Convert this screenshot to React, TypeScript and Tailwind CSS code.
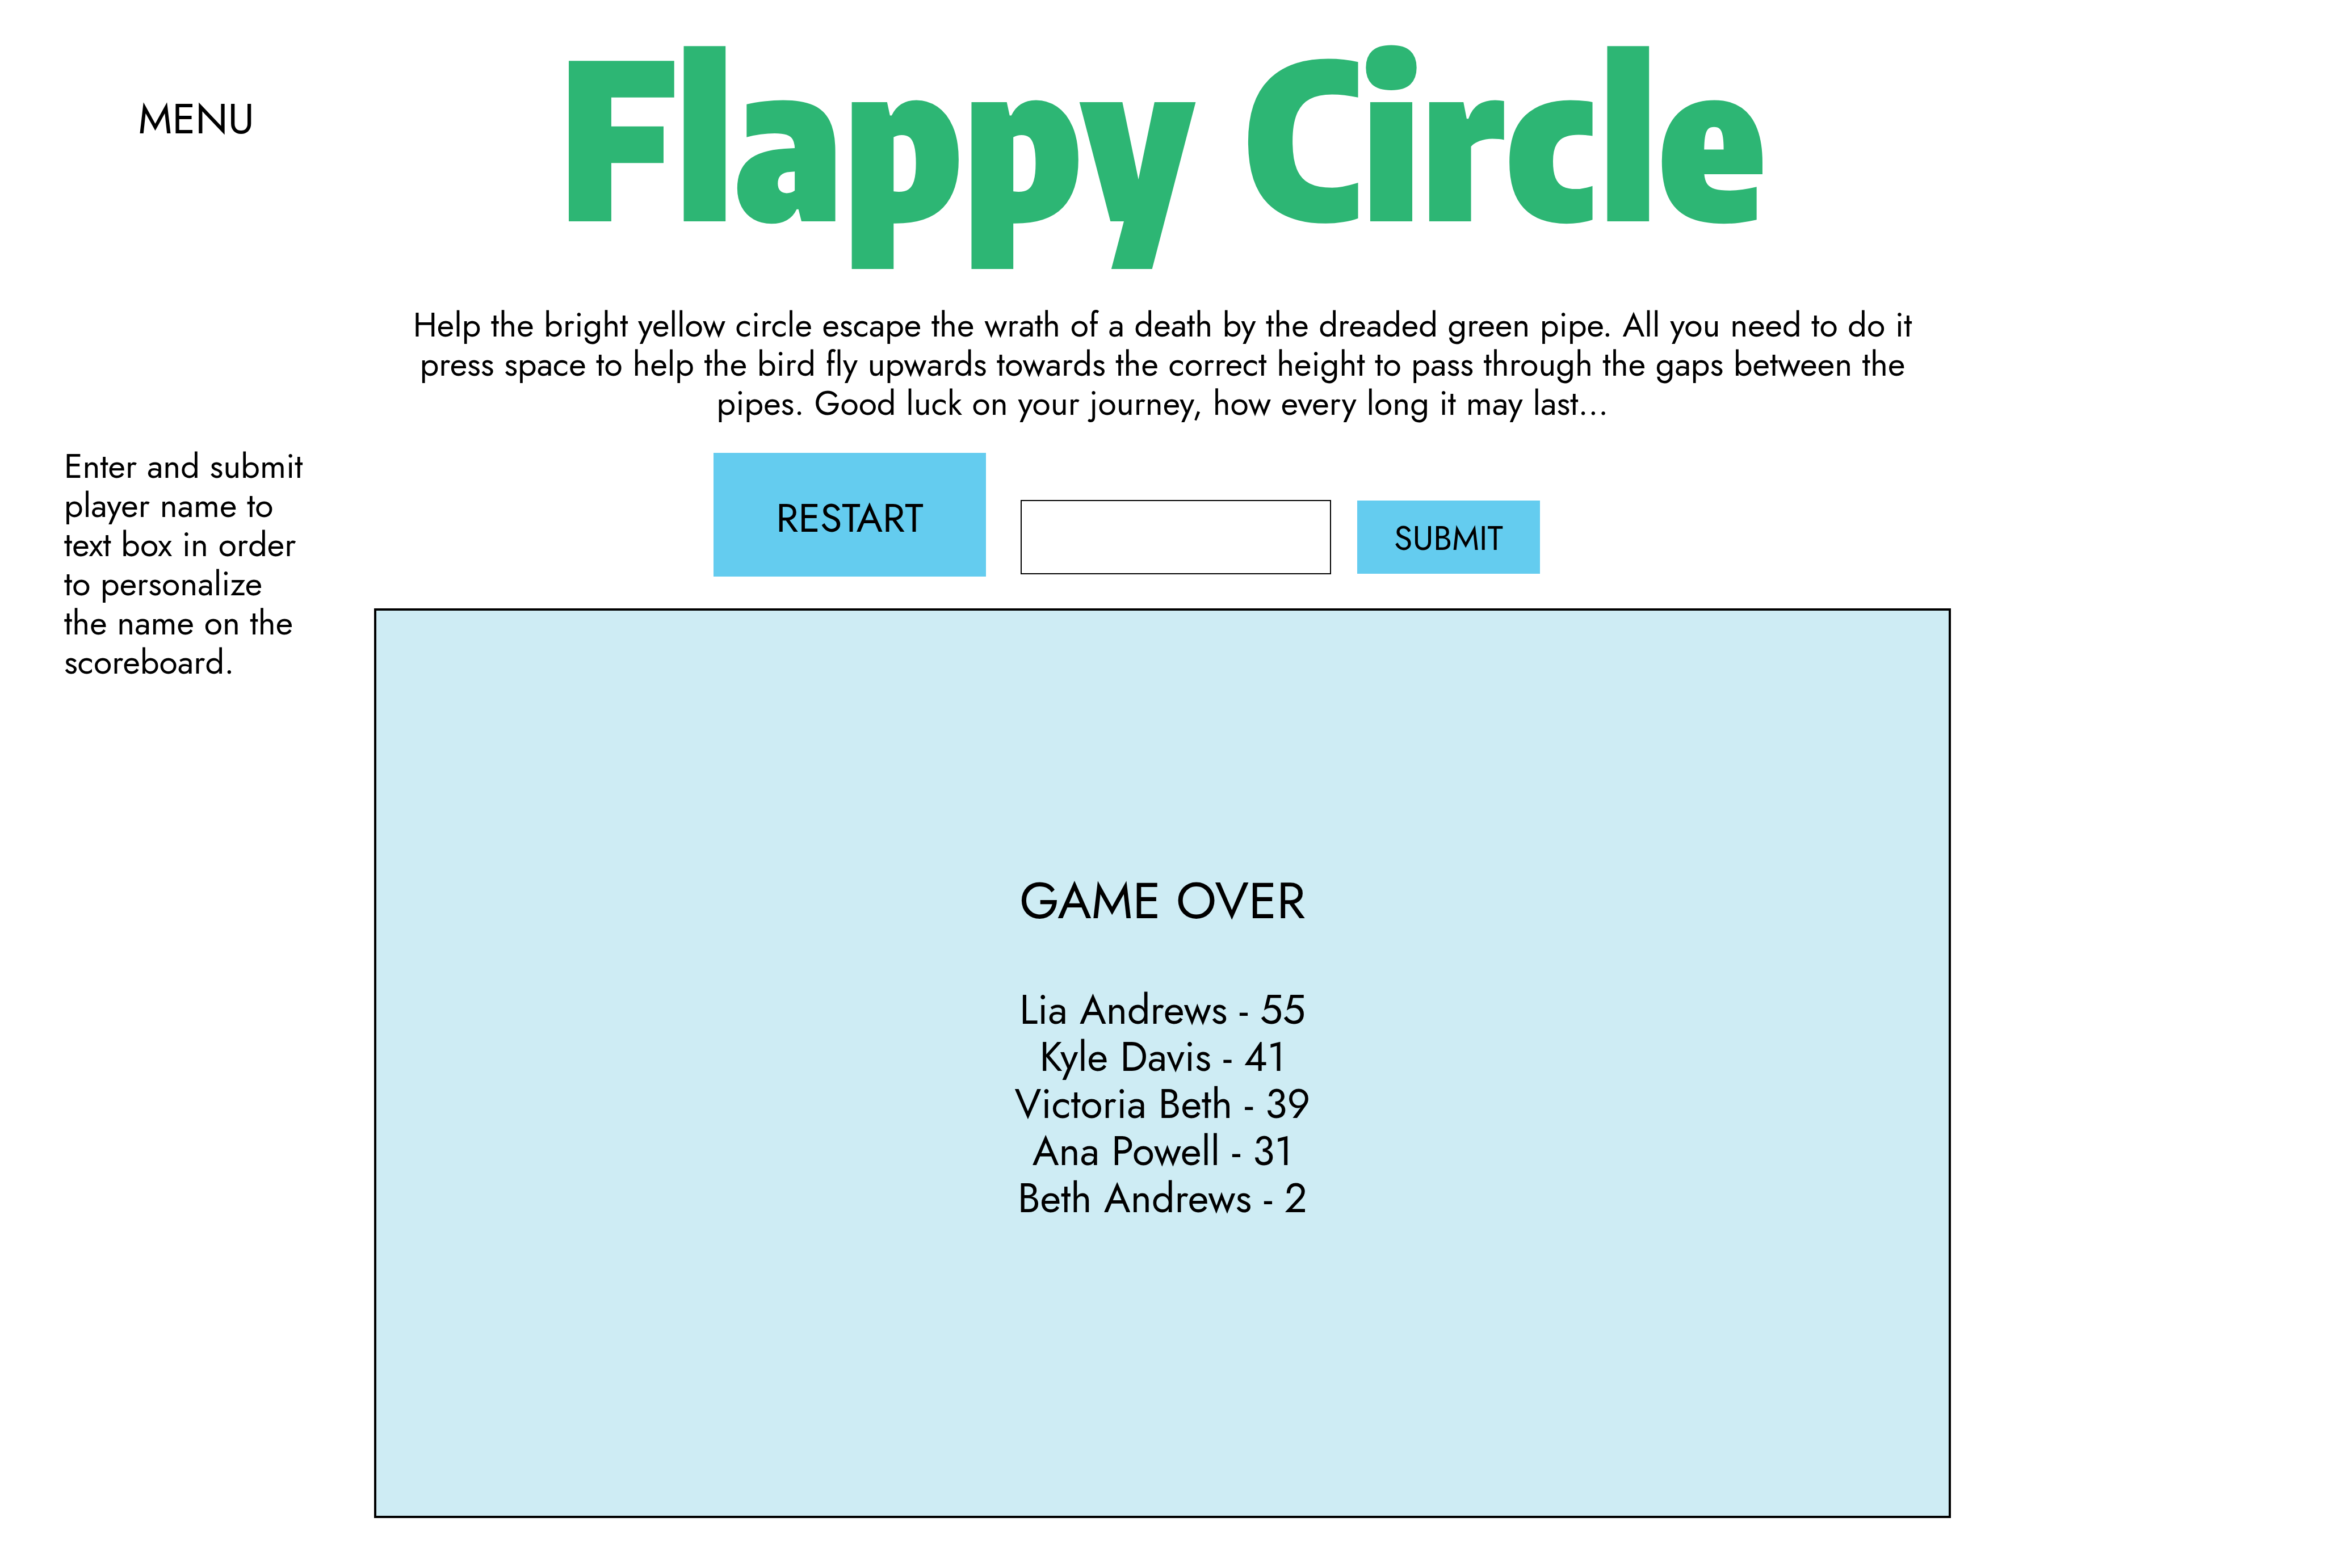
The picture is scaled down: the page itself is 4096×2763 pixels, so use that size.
import { useState } from "react";
import type { FormEvent } from "react";

const scores = [
  { name: "Lia Andrews", score: 55 },
  { name: "Kyle Davis", score: 41 },
  { name: "Victoria Beth", score: 39 },
  { name: "Ana Powell", score: 31 },
  { name: "Beth Andrews", score: 2 },
];

function Sidebar() {
  return (
    <aside className="flex flex-col pt-[168px]">
      <nav className="flex justify-center pl-8">
        <a href="#menu" className="text-[74px] leading-[83px]">
          MENU
        </a>
      </nav>
      <label
        htmlFor="player-name"
        className="mt-[536px] ml-[113px] block max-w-[430px] text-[59px] leading-[69px]"
      >
        Enter and submit player name to text box in order to personalize the name on the scoreboard.
      </label>
    </aside>
  );
}

function Controls() {
  const [name, setName] = useState("");
  const submit = (event: FormEvent) => event.preventDefault();
  return (
    <div className="mt-[53px] flex items-end justify-center pr-[126px]">
      <button type="button" className="h-[218px] w-[480px] bg-[#64ccef] pt-3 text-[70px] leading-[80px]">
        RESTART
      </button>
      <form onSubmit={submit} className="mb-1 ml-[61px] flex items-center gap-[46px]">
        <input
          id="player-name"
          type="text"
          value={name}
          onChange={(event) => setName(event.target.value)}
          className="h-[131px] w-[547px] border-2 border-black bg-white px-6 text-[59px] leading-[69px] outline-none"
        />
        <button type="submit" className="h-[129px] w-[322px] bg-[#64ccef] pt-1 text-[59px] leading-[69px]">
          SUBMIT
        </button>
      </form>
    </div>
  );
}

function GamePanel() {
  return (
    <section className="mt-14 border-4 border-black bg-[#ceecf4] pt-[461px] pb-[518px] text-center">
      <h2 className="text-[90px] leading-[100px]">GAME OVER</h2>
      <ol className="mt-[101px] text-[71px] leading-[83px]">
        {scores.map(({ name, score }) => (
          <li key={name}>{`${name} - ${score}`}</li>
        ))}
      </ol>
    </section>
  );
}

export default function App() {
  return (
    <div className="grid min-h-screen grid-cols-[16.1%_minmax(0,1fr)_16.1%] bg-white font-['Jost','Lato',sans-serif] text-black">
      <Sidebar />
      <main className="flex flex-col pt-9">
        <h1 className="text-center font-['Encode_Sans_Condensed','Roboto_Condensed','Lato',sans-serif] text-[382px] leading-[400px] font-black whitespace-nowrap text-[#2db674]">
          Flappy Circle
        </h1>
        <p className="mx-auto mt-[102px] max-w-[2700px] text-center text-[59px] leading-[69px]">
          Help the bright yellow circle escape the wrath of a death by the dreaded green pipe. All you need to do it
          press space to help the bird fly upwards towards the correct height to pass through the gaps between the
          pipes. Good luck on your journey, how every long it may last...
        </p>
        <Controls />
        <GamePanel />
      </main>
    </div>
  );
}
